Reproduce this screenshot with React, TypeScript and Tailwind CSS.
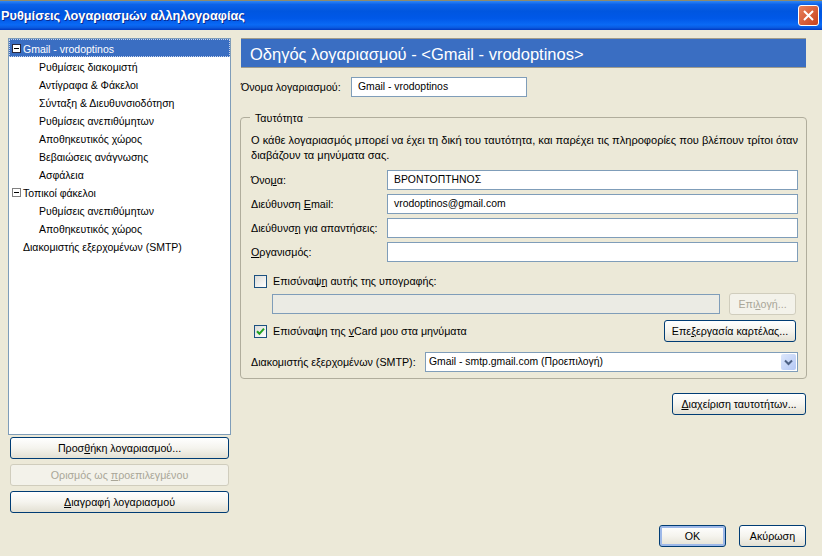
import React from "react";

const font = { fontFamily: '"Liberation Sans", sans-serif' };

function Btn({ children, className = "", disabled = false, def = false }: { children: React.ReactNode; className?: string; disabled?: boolean; def?: boolean }) {
  const base = disabled
    ? "border-[#d0cdbd] text-[#a9a698] bg-[#f3f2ea]"
    : "border-[#003c74] text-black bg-gradient-to-b from-white via-[#f5f4ee] to-[#e3e0d3]";
  return (
    <div className={`h-[22px] rounded-[3px] border flex items-center justify-center whitespace-nowrap ${base} ${def ? "shadow-[inset_0_0_0_2px_#9db8e8]" : ""} ${className}`}>
      <span>{children}</span>
    </div>
  );
}

function TextInput({ value, className = "" }: { value: string; className?: string }) {
  return (
    <div className={`h-[20px] border border-[#7f9db9] bg-white pl-[6px] pt-[1px] flex items-center whitespace-nowrap text-[10.4px] ${className}`}>{value}</div>
  );
}

function Row({ label, value }: { label: React.ReactNode; value: string }) {
  return (
    <div className="flex items-center h-[20px]">
      <div className="w-[136px] pt-[1px] whitespace-nowrap">{label}</div>
      <TextInput value={value} className="w-[411px]" />
    </div>
  );
}

function Tree({ text, level = 1, icon = false, selected = false }: { text: string; level?: number; icon?: boolean; selected?: boolean }) {
  const pad = level === 1 ? "pl-[30px]" : icon ? "pl-[3px]" : "pl-[14px]";
  return (
    <div className={`h-[18px] flex items-center whitespace-nowrap text-[10.5px] ${pad} ${selected ? "bg-[#3a6ec2] text-white outline-1 outline-dotted outline-offset-[-1px] outline-[#c8d4ea]" : "text-black"}`}>
      {icon && (
        <span className={`w-[9px] h-[9px] mr-[1px] border flex items-center justify-center bg-white ${selected ? "border-[#2a2a40]" : "border-[#808080]"}`}>
          <span className="w-[5px] h-[1px] bg-black" />
        </span>
      )}
      <span className={`pt-[2px] ${icon ? "ml-[1px]" : ""}`}>{text}</span>
    </div>
  );
}

function Check({ checked = false }: { checked?: boolean }) {
  return (
    <span className="w-[13px] h-[13px] border border-[#1c5180] bg-gradient-to-br from-[#dcdcd7] to-white flex items-center justify-center shrink-0">
      {checked && (
        <svg width="9" height="9" viewBox="0 0 9 9">
          <path d="M1 4.2 L3.4 6.8 L8 1.6" fill="none" stroke="#21a121" strokeWidth="2" />
        </svg>
      )}
    </span>
  );
}

export default function App() {
  return (
    <div style={font} className="w-[822px] h-[556px] bg-[#ece9d8] text-[10.7px] leading-none text-black overflow-hidden flex flex-col">
      <div className="h-[30px] shrink-0 flex items-center justify-between pl-[1px] pr-[3px] border-t border-t-[#8f8a6c] bg-[linear-gradient(180deg,#2f86f5_0%,#0c62e8_12%,#0056e0_35%,#0058e8_60%,#0a6af5_82%,#0a5ae0_92%,#0038c0_100%)]">
        <span className="pt-[2px] text-white font-bold text-[12.75px] [text-shadow:1px_1px_0_#0a2a90]">Ρυθμίσεις λογαριασμών αλληλογραφίας</span>
        <span className="w-[21px] h-[21px] rounded-[3px] border border-white bg-gradient-to-br from-[#e8805a] to-[#c8401a] flex items-center justify-center">
          <svg width="13" height="13" viewBox="0 0 13 13">
            <path d="M2 2 L11 11 M11 2 L2 11" stroke="white" strokeWidth="2" />
          </svg>
        </span>
      </div>

      <div className="flex pt-[8px] pl-[8px] flex-1">
        <div className="w-[223px] shrink-0 flex flex-col">
          <div className="h-[397px] border border-[#7f9db9] bg-white">
            <Tree text="Gmail - vrodoptinos" level={0} icon selected />
            <Tree text="Ρυθμίσεις διακομιστή" />
            <Tree text="Αντίγραφα & Φάκελοι" />
            <Tree text="Σύνταξη & Διευθυνσιοδότηση" />
            <Tree text="Ρυθμίσεις ανεπιθύμητων" />
            <Tree text="Αποθηκευτικός χώρος" />
            <Tree text="Βεβαιώσεις ανάγνωσης" />
            <Tree text="Ασφάλεια" />
            <Tree text="Τοπικοί φάκελοι" level={0} icon />
            <Tree text="Ρυθμίσεις ανεπιθύμητων" />
            <Tree text="Αποθηκευτικός χώρος" />
            <Tree text="Διακομιστής εξερχομένων (SMTP)" level={0} />
          </div>
          <div className="flex flex-col gap-[5px] mt-[2px] ml-[2px] w-[219px]">
            <Btn>Προσ<u>θ</u>ήκη λογαριασμού...</Btn>
            <Btn disabled>Ορισμός ως <u>π</u>ροεπιλεγμένου</Btn>
            <Btn><u>Δ</u>ιαγραφή λογαριασμού</Btn>
          </div>
        </div>

        <div className="ml-[9px] w-[567px] flex flex-col">
          <div className="h-[30px] ml-[1px] w-[565px] bg-[#3a6ec2] border-t border-t-[#a09c8c] border-b border-b-[#a09c8c] flex items-center pl-[9px] pt-[2px] text-white text-[16.5px]">
            Οδηγός λογαριασμού - &lt;Gmail - vrodoptinos&gt;
          </div>
          <div className="flex items-center h-[20px] mt-[9px]">
            <div className="w-[111px] pl-[1px] whitespace-nowrap">Όνομα λογαριασμού:</div>
            <TextInput value="Gmail - vrodoptinos" className="w-[176px]" />
          </div>

          <div className="relative mt-[20px] h-[262px] border border-[#b0ad9c] rounded-[4px] pl-[10px] pr-[8px]">
            <span className="absolute left-[9px] top-[-5px] px-[5px] bg-[#ece9d8]">Ταυτότητα</span>
            <div className="mt-[15px] leading-[15px] text-[11.05px] whitespace-nowrap">
              <div>Ο κάθε λογαριασμός μπορεί να έχει τη δική του ταυτότητα, και παρέχει τις πληροφορίες που βλέπουν τρίτοι όταν</div>
              <div>διαβάζουν τα μηνύματα σας.</div>
            </div>
            <div className="mt-[7px] flex flex-col gap-[4px]">
              <Row label={<>Όνο<u>μ</u>α:</>} value="ΒΡΟΝΤΟΠΤΗΝΟΣ" />
              <Row label={<>Διεύθυνση <u>E</u>mail:</>} value="vrodoptinos@gmail.com" />
              <Row label={<>Διεύθυνσ<u>η</u> για απαντήσεις:</>} value="" />
              <Row label={<><u>Ο</u>ργανισμός:</>} value="" />
            </div>
            <div className="flex items-center gap-[6px] mt-[12px] ml-[3px] h-[14px]">
              <Check />
              <span>Επισύναψ<u>η</u> αυτής της υπογραφής:</span>
            </div>
            <div className="flex items-center mt-[5px] ml-[21px]">
              <div className="w-[448px] h-[20px] border border-[#7f9db9] bg-[#ebebe4]" />
              <Btn disabled className="w-[67px] ml-[9px]">Επι<u>λ</u>ογή...</Btn>
            </div>
            <div className="flex items-center justify-between mt-[5px] ml-[3px] w-[542px]">
              <div className="flex items-center gap-[6px]">
                <Check checked />
                <span>Επισύναψη της <u>v</u>Card μου στα μηνύματα</span>
              </div>
              <Btn className="w-[132px]">Επε<u>ξ</u>εργασία καρτέλας...</Btn>
            </div>
            <div className="flex items-center mt-[10px]">
              <div className="w-[174px] whitespace-nowrap">Διακομιστής εξερ<u>χ</u>ομένων (SMTP):</div>
              <div className="w-[373px] h-[20px] border border-[#7f9db9] bg-white flex items-center justify-between pl-[3px] pr-[1px]">
                <span className="whitespace-nowrap text-[10.4px]">Gmail - smtp.gmail.com (Προεπιλογή)</span>
                <span className="w-[15px] h-[16px] rounded-[2px] bg-gradient-to-br from-[#dde7fb] to-[#b4c8f5] flex items-center justify-center">
                  <svg width="9" height="7" viewBox="0 0 9 7">
                    <path d="M1 1.5 L4.5 5 L8 1.5" fill="none" stroke="#4d6185" strokeWidth="2" />
                  </svg>
                </span>
              </div>
            </div>
          </div>

          <div className="flex justify-end mt-[14px] w-[566px]">
            <Btn className="w-[134px]"><u>Δ</u>ιαχείριση ταυτοτήτων...</Btn>
          </div>
          <div className="flex justify-end gap-[13px] mt-[110px] w-[566px]">
            <Btn def className="w-[67px]">OK</Btn>
            <Btn className="w-[67px]">Ακύρωση</Btn>
          </div>
        </div>
      </div>
    </div>
  );
}
